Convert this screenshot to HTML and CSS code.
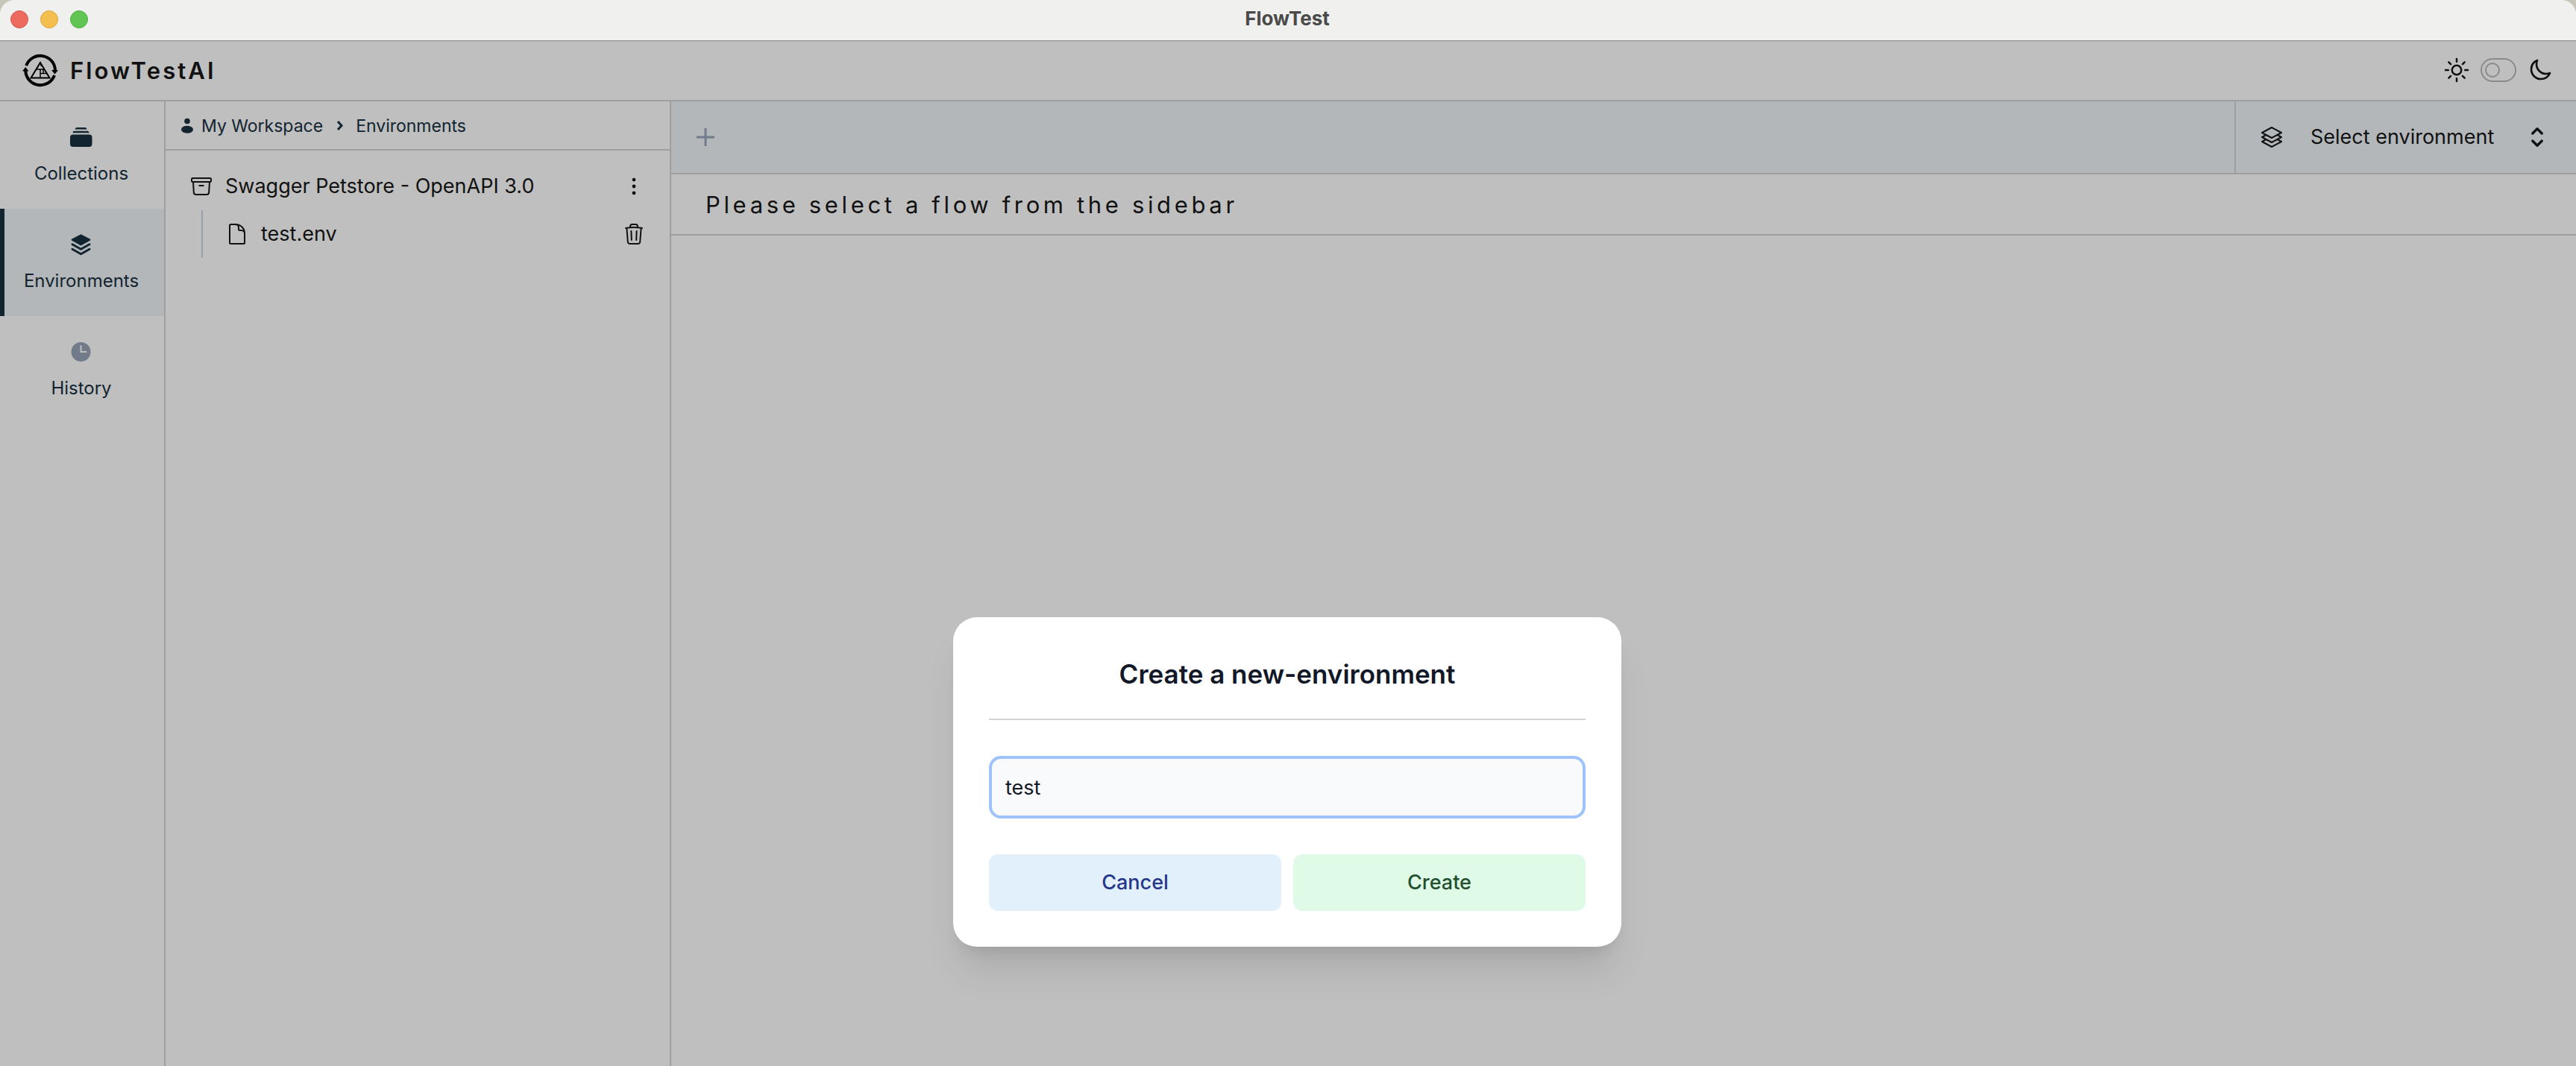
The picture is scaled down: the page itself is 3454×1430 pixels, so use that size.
FILE: index.html
```html
<!DOCTYPE html>
<html lang="en">
<head>
<meta charset="utf-8">
<title>FlowTest</title>
<link rel="stylesheet" href="styles.css">
</head>
<body>
<div class="window">
  <header class="titlebar">
    <div class="lights">
      <button class="light light-close" aria-label="Close"></button>
      <button class="light light-min" aria-label="Minimize"></button>
      <button class="light light-max" aria-label="Zoom"></button>
    </div>
    <span class="window-title">FlowTest</span>
  </header>

  <div class="content">
    <div class="app">
      <div class="appbar">
        <a class="brand" href="#">
          <svg class="logo" viewBox="0 0 48 48" fill="none" stroke="#000">
            <path d="M5.200 17A20 20 0 0 1 43.800 21V24" stroke-width="4"/>
            <path d="M43 30A20 20 0 0 1 4.300 25V23" stroke-width="4"/>
            <path d="M39 23h9l-4.500 5.500zM0 24.500l4.200-5.500 4.300 5.500z" fill="#000" stroke="none"/>
            <path d="M24 13 36.500 33.500h-25z" stroke-width="2"/>
            <path d="M18.500 22h11M24 22v11.500M28 22v5.500M24 27.500h9M24 13l1.500 5" stroke-width="1.500"/>
          </svg>
          <span>FlowTestAI</span>
        </a>
        <div class="theme">
          <svg class="icon-lg" viewBox="0 0 24 24"><path d="M12 3v2.250m6.364.386-1.591 1.591M21 12h-2.250m-.386 6.364-1.591-1.591M12 18.750V21m-4.773-4.227-1.591 1.591M5.250 12H3m4.227-4.773L5.636 5.636M15.750 12a3.750 3.750 0 1 1-7.500 0 3.750 3.750 0 0 1 7.500 0Z"/></svg>
          <input type="checkbox" class="toggle" aria-label="Dark theme">
          <svg class="icon-lg moon" viewBox="0 0 24 24"><path d="M21.752 15.002A9.720 9.720 0 0 1 18 15.750c-5.385 0-9.750-4.365-9.750-9.750 0-1.330.266-2.597.748-3.752A9.753 9.753 0 0 0 3 11.250C3 16.635 7.365 21 12.750 21a9.753 9.753 0 0 0 9.002-5.998Z"/></svg>
        </div>
      </div>

      <div class="body">
        <nav class="rail">
          <a class="rail-item" href="#">
            <svg viewBox="0 0 36 36"><path d="M11.500 5h12q1.500 0 2 2.500h-16q.5-2.500 2-2.500ZM8.500 9.800h18q1.500 0 2.200 2.400h-22.400q.7-2.400 2.200-2.400Z"/><rect x="3" y="14.500" width="29.500" height="16.500" rx="4"/></svg>
            <span>Collections</span>
          </a>
          <a class="rail-item active" href="#">
            <svg viewBox="0 0 36 36"><path d="M17.500 4.200 30 10.800q1 .8 0 1.600L17.500 19.500 5 12.400q-1-.8 0-1.600Z"/><path class="line" d="m6 17.800 11.500 6.400L29 17.800M6 24.300l11.500 6.400L29 24.300"/></svg>
            <span>Environments</span>
          </a>
          <a class="rail-item" href="#">
            <svg class="clock" viewBox="0 0 36 36"><circle cx="17.500" cy="18" r="13"/><path d="M17.500 10v8h7"/></svg>
            <span>History</span>
          </a>
        </nav>

        <aside class="sidebar">
          <div class="crumbs">
            <svg class="person" viewBox="0 0 18 24"><circle cx="9" cy="5.500" r="3.800"/><ellipse cx="9" cy="16.800" rx="8" ry="5"/></svg>
            <a href="#">My Workspace</a>
            <svg class="sep" viewBox="0 0 18 24"><path d="m6 6 5 5.500L6 17"/></svg>
            <a href="#">Environments</a>
          </div>
          <div class="tree">
            <div class="row">
              <svg class="icon" viewBox="0 0 24 24"><path d="m20.250 7.500-.625 10.632a2.250 2.250 0 0 1-2.247 2.118H6.622a2.250 2.250 0 0 1-2.247-2.118L3.750 7.500M10 11.250h4M3.375 7.500h17.250c.621 0 1.125-.504 1.125-1.125v-1.500c0-.621-.504-1.125-1.125-1.125H3.375c-.621 0-1.125.504-1.125 1.125v1.500c0 .621.504 1.125 1.125 1.125Z"/></svg>
              <span class="row-name">Swagger Petstore - OpenAPI 3.0</span>
              <button class="bare" aria-label="Collection options"><svg class="icon dots" viewBox="0 0 24 24"><circle cx="12" cy="5.300" r="1.800"/><circle cx="12" cy="12" r="1.800"/><circle cx="12" cy="18.700" r="1.800"/></svg></button>
            </div>
            <div class="row child">
              <svg class="icon" viewBox="0 0 24 24"><path d="M19.500 14.250v-2.625a3.375 3.375 0 0 0-3.375-3.375h-1.500A1.125 1.125 0 0 1 13.500 7.125v-1.500a3.375 3.375 0 0 0-3.375-3.375H8.250m2.250 0H5.625c-.621 0-1.125.504-1.125 1.125v17.250c0 .621.504 1.125 1.125 1.125h12.750c.621 0 1.125-.504 1.125-1.125V11.250a9 9 0 0 0-9-9Z"/></svg>
              <span class="row-name">test.env</span>
              <button class="bare" aria-label="Delete test.env"><svg class="icon" viewBox="0 0 24 24"><path d="m14.740 9-.346 9m-4.788 0L9.260 9m9.968-3.210c.342.052.682.107 1.022.166m-1.022-.165L18.160 19.673a2.250 2.250 0 0 1-2.244 2.077H8.084a2.250 2.250 0 0 1-2.244-2.077L4.772 5.790m14.456 0a48.108 48.108 0 0 0-3.478-.397m-12 .562c.34-.059.68-.114 1.022-.165m0 0a48.110 48.110 0 0 1 3.478-.397m7.500 0v-.916c0-1.180-.91-2.164-2.090-2.201a51.964 51.964 0 0 0-3.320 0c-1.180.037-2.090 1.022-2.090 2.201v.916m7.500 0a48.667 48.667 0 0 0-7.500 0"/></svg></button>
            </div>
          </div>
        </aside>

        <main class="main">
          <div class="tabs">
            <button class="bare add" aria-label="New tab"><svg viewBox="0 0 28 28"><path d="M14 2v24M2 14h24"/></svg></button>
            <label class="env">
              <svg class="icon" viewBox="0 0 24 24"><path d="M6.429 9.750 2.250 12l4.179 2.250m0-4.500 5.571 3 5.571-3m-11.142 0L2.250 7.500 12 2.250l9.750 5.250-4.179 2.250m0 0L21.750 12l-4.179 2.250m0 0 4.179 2.250L12 21.750 2.250 16.500l4.179-2.250m11.142 0-5.571 3-5.571-3"/></svg>
              <select aria-label="Environment"><option>Select environment</option></select>
              <svg class="icon-lg updown" viewBox="0 0 24 24"><path d="M8.250 15 12 18.750 15.750 15m-7.500-6L12 5.250 15.750 9"/></svg>
            </label>
          </div>
          <p class="hint">Please select a flow from the sidebar</p>
        </main>
      </div>
    </div>

    <div class="overlay">
      <form class="modal" role="dialog" aria-labelledby="dialog-title">
        <h1 id="dialog-title">Create a new-environment</h1>
        <input class="field" type="text" value="test" aria-labelledby="dialog-title">
        <div class="actions">
          <button type="button" class="btn btn-cancel">Cancel</button>
          <button type="button" class="btn btn-create">Create</button>
        </div>
      </form>
    </div>
  </div>
</div>
</body>
</html>
```

FILE: styles.css
```css
*, *::before, *::after { box-sizing: border-box; }

:root {
  --line: #d4d4d4;
  --panel: #eff4f8;
  --navy: #17303f;
  --ink: #171717;
  --muted: #98a4b8;
}

html { height: 100%; background: #c8c6b8; }

body {
  margin: 0;
  height: 100%;
  font-family: Inter, "Liberation Sans", sans-serif;
  font-size: 27px;
  line-height: 40px;
  color: var(--ink);
}

h1, p { margin: 0; }
a { color: inherit; text-decoration: none; }
svg { display: block; flex: none; }
button, input, select { font: inherit; color: inherit; }

.window {
  display: flex;
  flex-direction: column;
  min-height: 100%;
  border-radius: 20px 20px 0 0;
  overflow: hidden;
  background: #fff;
}

/* Title bar */
.titlebar {
  display: grid;
  grid-template-columns: 1fr auto 1fr;
  align-items: center;
  height: 56px;
  padding: 0 16px 4px 14px;
  background: #f0f0ee;
  box-shadow: inset 0 -1px #b4b4b4, inset 0 -2px #979797;
}
.lights { display: flex; gap: 16px; }
.light {
  width: 24px;
  height: 24px;
  padding: 0;
  border: 1px solid;
  border-radius: 50%;
}
.light-close { background: #ec6a5e; border-color: #d5554a; }
.light-min { background: #f5bf4f; border-color: #dba53c; }
.light-max { background: #61c554; border-color: #4fac43; }
.window-title {
  padding-bottom: 2px;
  font-size: 26px;
  font-weight: 700;
  color: #4a4a4a;
}

.content { position: relative; display: flex; flex: 1; }
.app { display: flex; flex-direction: column; flex: 1; }

/* App bar */
.appbar {
  display: flex;
  align-items: center;
  justify-content: space-between;
  height: 80px;
  padding: 0 28px 0 30px;
  border-bottom: 2px solid var(--line);
}
.brand {
  display: flex;
  align-items: center;
  gap: 16px;
  font-size: 31px;
  font-weight: 600;
  letter-spacing: 0.1em;
}
.logo { width: 48px; height: 48px; }
.theme { display: flex; align-items: center; gap: 12px; padding-bottom: 2px; }
.icon, .icon-lg {
  width: 32px;
  height: 32px;
  fill: none;
  stroke: currentColor;
  stroke-width: 1.5;
  stroke-linecap: round;
  stroke-linejoin: round;
}
.icon-lg { width: 40px; height: 40px; }
.moon { padding: 4px; stroke-width: 2; }
.updown { stroke-width: 2; }
.dots { fill: currentColor; stroke: none; }
.toggle {
  appearance: none;
  display: flex;
  align-items: center;
  width: 48px;
  height: 32px;
  margin: 0;
  padding: 0 4px;
  border: 2px solid #b9b9b9;
  border-radius: 16px;
}
.toggle::before {
  content: "";
  width: 20px;
  height: 20px;
  border: 2px solid #b9b9b9;
  border-radius: 50%;
}

.body { display: flex; flex: 1; }

/* Navigation rail */
.rail {
  flex: none;
  width: 222px;
  border-right: 2px solid var(--line);
  font-size: 24px;
  line-height: 32px;
  color: var(--navy);
}
.rail-item {
  display: flex;
  flex-direction: column;
  align-items: center;
  gap: 15px;
  padding: 30px 2px 31px 0;
}
.rail-item svg { width: 36px; height: 36px; fill: currentColor; }
.rail-item.active { background: var(--panel); box-shadow: inset 6px 0 var(--navy); }
.rail-item .line { fill: none; stroke: currentColor; stroke-width: 3; stroke-linecap: round; stroke-linejoin: round; }
.rail-item .clock { fill: var(--muted); }
.rail-item .clock path { fill: none; stroke: #fff; stroke-width: 2; stroke-linecap: round; stroke-linejoin: round; }

/* Sidebar */
.sidebar { flex: none; width: 678px; border-right: 2px solid var(--line); }
.crumbs {
  display: flex;
  align-items: center;
  height: 66px;
  padding: 2px 20px 0;
  border-bottom: 2px solid var(--line);
  font-size: 23px;
  line-height: 32px;
  color: var(--navy);
}
.person { width: 18px; height: 24px; margin-right: 10px; fill: currentColor; }
.sep {
  width: 18px;
  height: 24px;
  margin: 0 12px 0 14px;
  fill: none;
  stroke: currentColor;
  stroke-width: 3;
}
.tree { padding: 16px 32px; }
.row { display: flex; align-items: center; gap: 16px; height: 64px; }
.row-name { flex: 1; }
.child { margin-left: 16px; padding-left: 30px; border-left: 2px solid #cbd5e1; }
.bare { padding: 0; border: 0; background: none; }

/* Main area */
.main { flex: 1; min-width: 0; }
.tabs {
  display: flex;
  align-items: stretch;
  justify-content: space-between;
  height: 98px;
  padding-left: 32px;
  border-bottom: 2px solid var(--line);
  background: var(--panel);
}
.add svg { width: 28px; height: 28px; fill: none; stroke: var(--muted); stroke-width: 3; }
.env {
  display: flex;
  align-items: center;
  width: 458px;
  padding: 0 32px;
  border-left: 2px solid var(--line);
}
.env select {
  flex: 1;
  appearance: none;
  margin-left: 36px;
  padding: 0;
  border: 0;
  background: none;
}
.hint {
  padding: 21px 46px 19px;
  border-bottom: 2px solid var(--line);
  font-size: 31px;
  letter-spacing: 0.15em;
}

/* Dialog */
.overlay {
  position: absolute;
  inset: 0;
  display: flex;
  align-items: flex-start;
  justify-content: center;
  padding: 772px 2px 0 0;
  background: rgba(0, 0, 0, 0.25);
}
.modal {
  width: 896px;
  padding: 48px;
  border-radius: 32px;
  background: #fff;
  box-shadow: 0 40px 50px -10px rgba(0, 0, 0, 0.1), 0 16px 20px -12px rgba(0, 0, 0, 0.1);
}
.modal h1 {
  padding-bottom: 32px;
  border-bottom: 2px solid var(--line);
  font-size: 35px;
  font-weight: 600;
  line-height: 56px;
  text-align: center;
  color: #111827;
}
.field {
  display: block;
  width: 100%;
  height: 84px;
  margin: 48px 0;
  padding: 0 18px;
  border: 4px solid #9dc3fa;
  border-radius: 16px;
  background: #f8fafc;
  color: #111827;
}
.actions { display: grid; grid-template-columns: 1fr 1fr; gap: 16px; }
.btn { height: 76px; padding: 0; border: 0; border-radius: 12px; font-weight: 500; }
.btn-cancel { background: #e2f0fc; color: #25378a; }
.btn-create { background: #e0fae8; color: #22502f; }
```
